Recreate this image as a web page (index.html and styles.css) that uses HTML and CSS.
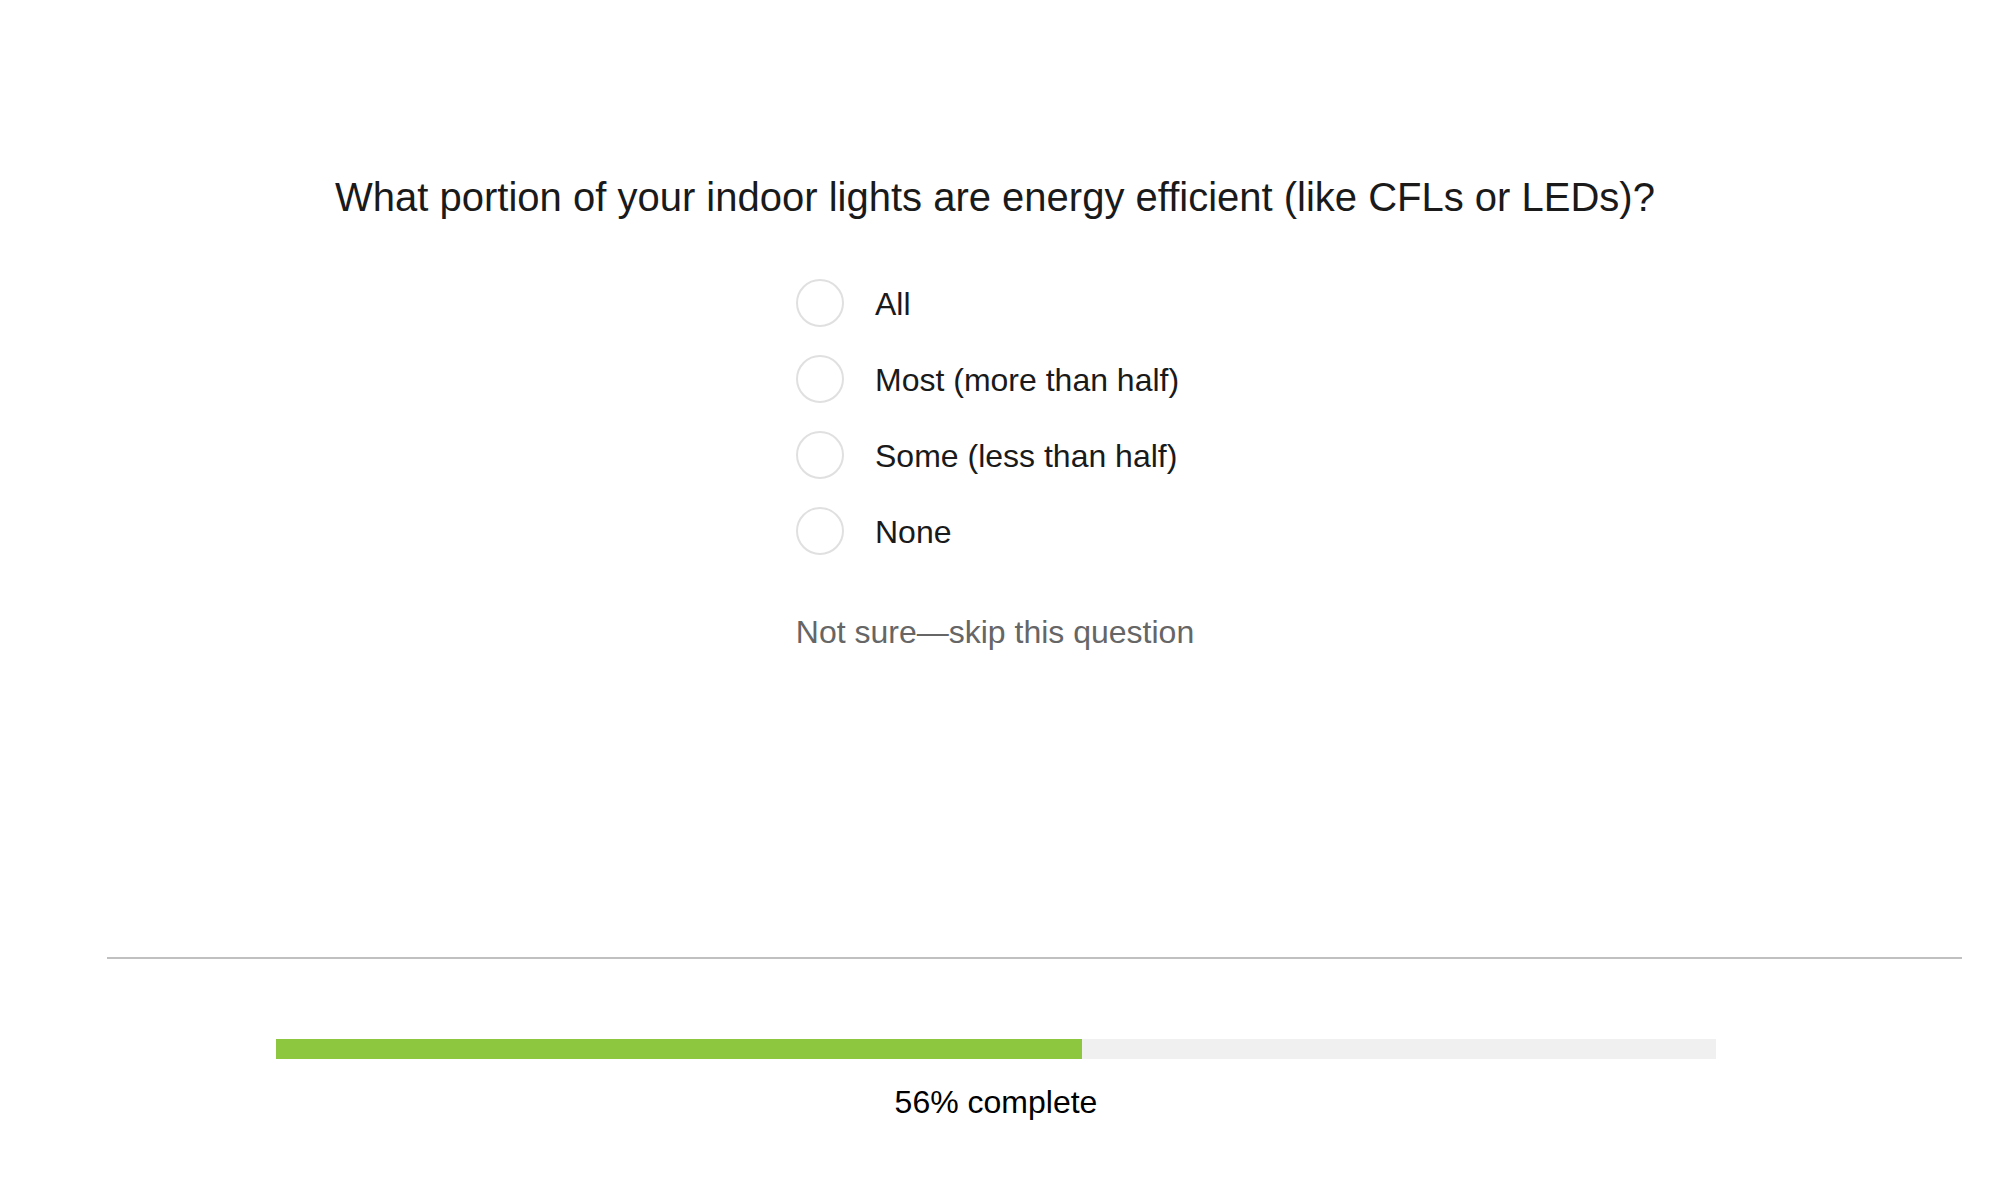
FILE: index.html
```html
<!DOCTYPE html>
<html lang="en">
<head>
<meta charset="utf-8">
<meta name="viewport" content="width=device-width, initial-scale=1">
<title>Home energy survey</title>
<link rel="stylesheet" href="styles.css">
</head>
<body>
<main class="survey">
  <form class="question">
    <fieldset class="choices">
      <legend class="title">What portion of your indoor lights are energy efficient (like CFLs or LEDs)?</legend>
      <div class="options">
        <label class="option"><input class="radio" type="radio" name="portion" value="all"><span class="text">All</span></label>
        <label class="option"><input class="radio" type="radio" name="portion" value="most"><span class="text">Most (more than half)</span></label>
        <label class="option"><input class="radio" type="radio" name="portion" value="some"><span class="text">Some (less than half)</span></label>
        <label class="option"><input class="radio" type="radio" name="portion" value="none"><span class="text">None</span></label>
      </div>
    </fieldset>
    <a class="skip" href="#skip">Not sure—skip this question</a>
  </form>
</main>
<footer class="footer">
  <div class="track" role="progressbar" aria-label="Survey progress" aria-valuemin="0" aria-valuemax="100" aria-valuenow="56">
    <div class="fill" style="width: 56%"></div>
  </div>
  <p class="status">56% complete</p>
</footer>
</body>
</html>
```
FILE: styles.css
```css
* {
  box-sizing: border-box;
}

body {
  display: flex;
  flex-direction: column;
  min-height: 100vh;
  margin: 0;
  background: #fff;
  color: #1a1a1a;
  font: 32px/40px "Liberation Sans", Arial, sans-serif;
}

.survey {
  flex: 1;
  padding: 171px 24px 48px;
}

.question {
  display: flex;
  flex-direction: column;
  align-items: center;
}

.choices {
  margin: 0;
  padding: 0;
  border: 0;
}

.title {
  padding: 0;
  font-size: 40px;
  line-height: 52px;
  text-align: center;
}

.options {
  display: grid;
  gap: 28px;
  width: 398px;
  margin: 56px auto 0;
}

.option {
  display: flex;
  align-items: center;
  gap: 31px;
  cursor: pointer;
}

.text {
  padding-top: 2px;
}

.radio {
  flex: none;
  appearance: none;
  width: 48px;
  height: 48px;
  margin: 0;
  border: 2px solid #e0e0e0;
  border-radius: 50%;
  background: #fff;
}

.radio:checked {
  border: 14px solid #8dc63f;
}

.skip {
  margin-top: 57px;
  color: #666;
  text-decoration: none;
}

.footer {
  margin: 0 28px 0 107px;
  padding: 80px 246px 78px 169px;
  border-top: 2px solid #c0c0c0;
  color: #000;
}

.track {
  height: 20px;
  background: #f0f0f0;
}

.fill {
  height: 100%;
  background: #8dc63f;
}

.status {
  margin: 23px 0 0;
  text-align: center;
}
```
